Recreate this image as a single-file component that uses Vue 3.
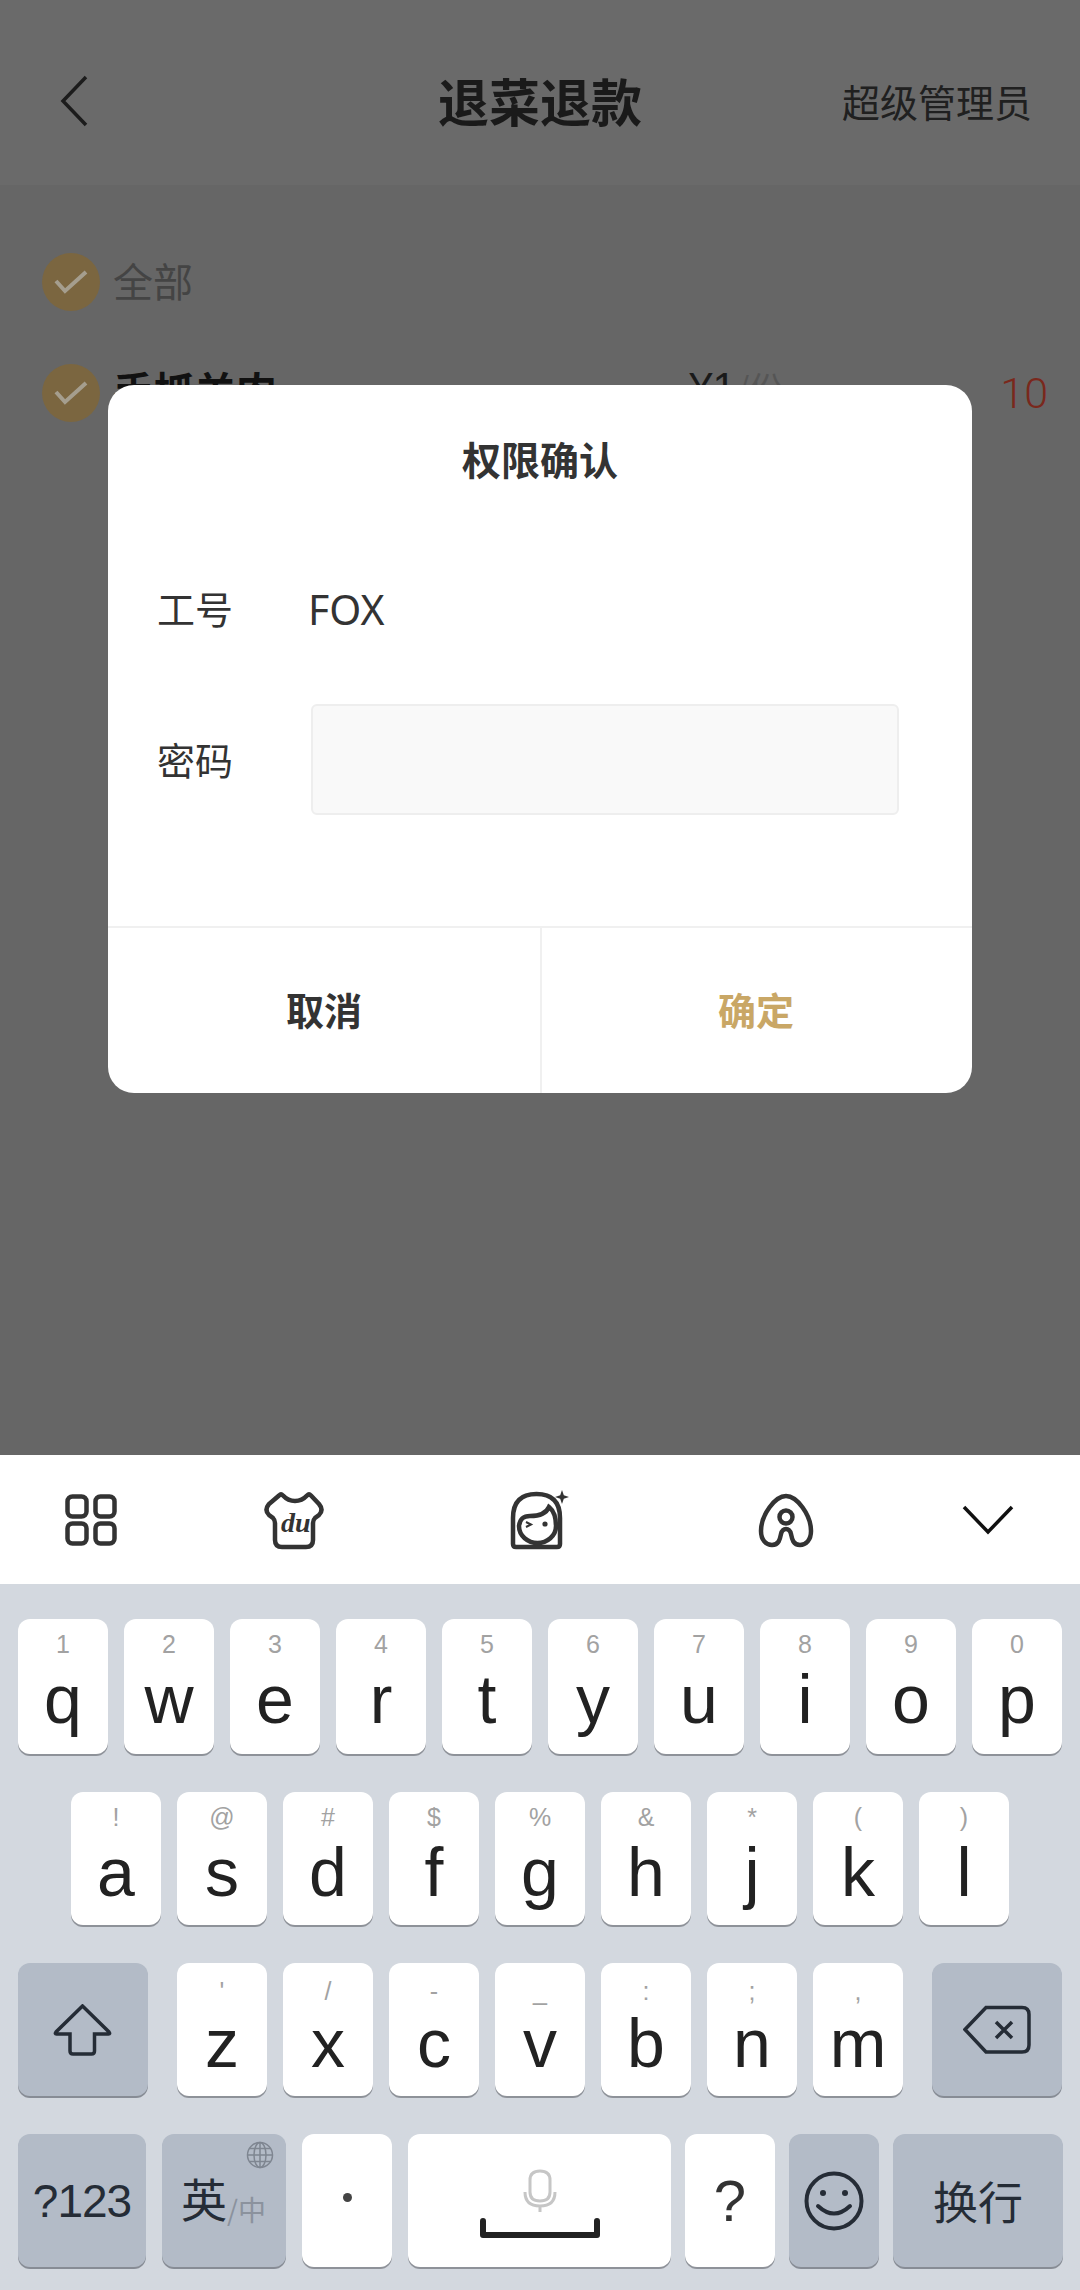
<template>
  <div class="screen">
    <!-- Dimmed page behind the dialog -->
    <div class="page">
      <header class="topbar">
        <svg class="back" width="32" height="54" viewBox="0 0 32 54">
          <path d="M28 3 L5 27 L28 51" />
        </svg>
        <h1 class="page-title">退菜退款</h1>
        <span class="role">超级管理员</span>
      </header>

      <div class="dish-list">
        <div class="dish-row">
          <span class="check"><svg width="34" height="26" viewBox="0 0 34 26"><path d="M2 12 L11 22 L32 3" /></svg></span>
          <span class="all-label">全部</span>
        </div>
        <div class="dish-row">
          <span class="check"><svg width="34" height="26" viewBox="0 0 34 26"><path d="M2 12 L11 22 L32 3" /></svg></span>
          <span class="dish-name">手抓羊肉</span>
          <span class="dish-price">¥1<small>/份</small></span>
          <span class="dish-qty">10</span>
        </div>
      </div>

      <!-- Permission dialog -->
      <div class="dialog">
        <div class="dialog-title">权限确认</div>
        <div class="form">
          <div class="form-row">
            <span class="form-label">工号</span>
            <span class="form-value">FOX</span>
          </div>
          <div class="form-row pwd-row">
            <span class="form-label">密码</span>
            <div class="pwd-input"></div>
          </div>
        </div>
        <div class="dialog-actions">
          <div class="action">取消</div>
          <div class="action confirm">确定</div>
        </div>
      </div>
    </div>

    <!-- Keyboard toolbar -->
    <div class="toolbar">
      <svg class="tool-grid" width="52" height="52" viewBox="0 0 52 52">
        <rect x="2.5" y="2.5" width="19" height="20" rx="5" />
        <rect x="30.5" y="2.5" width="19" height="20" rx="5" />
        <rect x="2.5" y="29.5" width="19" height="20" rx="5" />
        <rect x="30.5" y="29.5" width="19" height="20" rx="5" />
      </svg>
      <svg class="tool-shirt" width="90" height="80" viewBox="0 0 90 80">
        <path d="M29 15.5 Q31 13.5 33 15.5 Q38 21 45 21 Q52 21 57 15.5 Q59 13.5 61 15.5 L69 24 Q74 30 69 35 L65 38 Q63 40 63 43 V60 Q63 67 56 67 H32 Q25 67 25 60 V43 Q25 40 23 38 L19 35 Q14 30 19 24 Z" />
        <text x="31" y="52" class="du">du</text>
      </svg>
      <svg class="tool-face" width="80" height="80" viewBox="0 0 80 80">
        <path d="M13 64 V38 Q13 14 36.5 14 Q60 14 60 38 V64 Q60 67 57 67 H16 Q13 67 13 64 Z" />
        <path d="M19 46 C20 38 24 36 30 36 C38 36 46 34 49 27 C54 31 56 38 56 46 C56 56 47 63 37.5 63 C28 63 19 56 19 46 Z" />
        <path class="thin" d="M26 42 L31 44.5 L26 47" />
        <circle class="solid" cx="45" cy="44" r="2.6" />
        <path class="solid" d="M62 10 L63.8 15.2 L69 17 L63.8 18.8 L62 24 L60.2 18.8 L55 17 L60.2 15.2 Z" />
      </svg>
      <svg class="tool-a" width="80" height="70" viewBox="0 0 80 70">
        <path d="M41 11 C30 11 16 30 16 46 C16 55 21 60 27 60 C34 60 35 54 36 49 C37 45 39 44 41 44 C43 44 45 45 46 49 C47 54 48 60 55 60 C61 60 66 55 66 46 C66 30 52 11 41 11 Z" />
        <circle cx="41" cy="32" r="6.5" />
      </svg>
      <svg class="tool-down" width="52" height="30" viewBox="0 0 52 30">
        <path d="M2 2 L26 27 L50 2" />
      </svg>
    </div>

    <!-- Keyboard -->
    <div class="keyboard">
      <div class="row row-1">
        <div v-for="k in row1" :key="k[0]" class="key">
          <span class="hint">{{ k[1] }}</span>
          <span class="letter">{{ k[0] }}</span>
        </div>
      </div>
      <div class="row row-2">
        <div v-for="k in row2" :key="k[0]" class="key">
          <span class="hint">{{ k[1] }}</span>
          <span class="letter">{{ k[0] }}</span>
        </div>
      </div>
      <div class="row row-3">
        <div class="key fn shift">
          <svg width="60" height="52" viewBox="0 0 60 52">
            <path d="M29.5 2 L3 28 Q1.5 30 3.5 30 H17 V47 Q17 50 20 50 H38.5 Q41.5 50 41.5 47 V30 H55.5 Q57.5 30 56 28 Z" />
          </svg>
        </div>
        <div v-for="k in row3" :key="k[0]" class="key low-hint">
          <span class="hint">{{ k[1] }}</span>
          <span class="letter">{{ k[0] }}</span>
        </div>
        <div class="key fn backspace">
          <svg width="68" height="50" viewBox="0 0 68 50">
            <path d="M23 2.5 H59 Q66 2.5 66 9.5 V40 Q66 47 59 47 H23 L2 24.5 Z" />
            <path d="M33 17 L49 33 M49 17 L33 33" />
          </svg>
        </div>
      </div>
      <div class="row row-4">
        <div class="key fn num">?123</div>
        <div class="key fn lang">
          <svg class="globe" width="28" height="28" viewBox="0 0 28 28">
            <circle cx="14" cy="14" r="12.5" />
            <ellipse cx="14" cy="14" rx="6" ry="12.5" />
            <path d="M14 1.5 V26.5 M1.5 14 H26.5 M3.5 7.5 H24.5 M3.5 20.5 H24.5" />
          </svg>
          <span class="lang-en">英</span><span class="lang-cn">/中</span>
        </div>
        <div class="key dot-key"><i class="dot"></i></div>
        <div class="key space">
          <svg width="120" height="72" viewBox="0 0 120 72">
            <path class="mic" d="M50 12 Q50 3 60 3 Q70 3 70 12 V24 Q70 33 60 33 Q50 33 50 24 Z" />
            <path class="mic" d="M45 24 Q45 38 60 38 Q75 38 75 24 M60 38 V44" />
            <path class="bar" d="M3 53 V67 H117 V53" />
          </svg>
        </div>
        <div class="key tight question">?</div>
        <div class="key fn tight emoji">
          <svg width="60" height="60" viewBox="0 0 60 60">
            <circle cx="30" cy="30" r="27.5" />
            <circle class="eye" cx="19" cy="22" r="3" />
            <circle class="eye" cx="41" cy="22" r="3" />
            <path d="M14 35 Q30 50 46 35" />
          </svg>
        </div>
        <div class="key fn tight enter">换行</div>
      </div>
    </div>
  </div>
</template>

<script setup>
// Letter and the small symbol printed above it
const row1 = [['q', '1'], ['w', '2'], ['e', '3'], ['r', '4'], ['t', '5'], ['y', '6'], ['u', '7'], ['i', '8'], ['o', '9'], ['p', '0']]
const row2 = [['a', '!'], ['s', '@'], ['d', '#'], ['f', '$'], ['g', '%'], ['h', '&'], ['j', '*'], ['k', '('], ['l', ')']]
const row3 = [['z', "'"], ['x', '/'], ['c', '-'], ['v', '_'], ['b', ':'], ['n', ';'], ['m', ',']]
</script>

<style scoped>
.screen {
  width: 1080px;
  height: 2290px;
  display: flex;
  flex-direction: column;
  overflow: hidden;
  font-family: "Noto Sans CJK SC", "Liberation Sans", sans-serif;
}

/* Page under the mask */
.page {
  position: relative;
  height: 1455px;
  background: #666;
}

.topbar {
  position: relative;
  height: 185px;
  display: flex;
  align-items: center;
  padding: 16px 48px 0 58px;
  box-sizing: border-box;
  background: #6a6a6a;
}

.back {
  fill: none;
  stroke: #1c1c1c;
  stroke-width: 3.5;
}

.page-title {
  position: absolute;
  left: 0;
  right: 0;
  top: 66px;
  margin: 0;
  text-align: center;
  font-size: 51px;
  line-height: 68px;
  font-weight: 700;
  color: #1a1a1a;
}

.role {
  margin-left: auto;
  font-size: 38px;
  color: #202020;
}

.dish-list {
  padding: 41px 32px 0 42px;
}

.dish-row {
  height: 111px;
  display: flex;
  align-items: center;
}

.check {
  width: 58px;
  height: 58px;
  border-radius: 50%;
  background: #7b6640;
  display: flex;
  align-items: center;
  justify-content: center;
  margin-right: 13px;
}

.check path {
  fill: none;
  stroke: #a59e8e;
  stroke-width: 4;
}

.all-label {
  margin-top: -3px;
  font-size: 40px;
  color: #444;
}

.dish-name {
  margin-top: -8px;
  font-size: 41px;
  font-weight: 700;
  color: #111;
}

.dish-price {
  margin-left: auto;
  margin-right: 217px;
  margin-top: -10px;
  font-family: "Liberation Sans", sans-serif;
  font-size: 42px;
  color: #1a1a1a;
}

.dish-price small {
  font-family: "Noto Sans CJK SC", sans-serif;
  font-size: 34px;
  color: #555;
}

.dish-qty {
  font-family: "Roboto", "Liberation Sans", sans-serif;
  font-weight: 300;
  font-size: 43px;
  color: #7a281c;
}

/* Dialog */
.dialog {
  position: absolute;
  left: 108px;
  top: 385px;
  width: 864px;
  height: 708px;
  display: flex;
  flex-direction: column;
  background: #fff;
  border-radius: 26px;
  overflow: hidden;
}

.dialog-title {
  height: 146px;
  display: flex;
  align-items: center;
  justify-content: center;
  font-size: 39px;
  font-weight: 700;
  color: #333;
}

.form {
  padding: 50px 73px 0 49px;
}

.form-row {
  height: 56px;
  display: flex;
  align-items: center;
  font-size: 38px;
  color: #333;
}

.form-label {
  width: 154px;
  margin-top: -3px;
  flex-shrink: 0;
}

.form-value {
  margin-left: -3px;
  font-family: "Noto Sans", "Liberation Sans", sans-serif;
  font-size: 41px;
}

.pwd-row {
  height: 111px;
  margin-top: 67px;
}

.pwd-input {
  flex: 1;
  height: 111px;
  box-sizing: border-box;
  background: #f9f9f9;
  border: 2px solid #eeeeee;
  border-radius: 6px;
}

.dialog-actions {
  margin-top: auto;
  height: 167px;
  padding-bottom: 4px;
  display: flex;
  border-top: 2px solid #f0f0f0;
  box-sizing: border-box;
}

.action {
  flex: 1;
  display: flex;
  align-items: center;
  justify-content: center;
  font-size: 38px;
  font-weight: 700;
  color: #333;
}

.action.confirm {
  color: #c9a766;
  position: relative;
}

.action.confirm::before {
  content: "";
  position: absolute;
  left: 0;
  top: 0;
  bottom: -4px;
  width: 2px;
  background: #f0f0f0;
}

/* Toolbar */
.toolbar {
  height: 129px;
  display: flex;
  align-items: center;
  background: #fff;
}

.toolbar svg {
  flex-shrink: 0;
  fill: none;
  stroke: #333;
  stroke-width: 4.5;
}

.tool-grid { margin-left: 65px; }
.tool-shirt { margin-left: 133px; }
.tool-face { margin-left: 160px; }
.tool-a { margin-left: 165px; }
.tool-down { margin-left: 137px; }

.toolbar .tool-down {
  stroke: #111;
  stroke-width: 3.5;
}

.toolbar .thin { stroke-width: 2; }

.toolbar .solid {
  fill: #333;
  stroke: none;
}

.toolbar .du {
  font-family: "Liberation Serif", serif;
  font-style: italic;
  font-weight: 700;
  font-size: 28px;
  fill: #333;
  stroke: none;
}

/* Keyboard */
.keyboard {
  flex: 1;
  display: flex;
  flex-direction: column;
  gap: 38px;
  padding-top: 35px;
  background: #d3d8df;
  font-family: "Liberation Sans", sans-serif;
}

.row {
  display: flex;
  gap: 16px;
  height: 133px;
  padding-left: 18px;
}

.row-1 { height: 135px; }
.row-2 { padding-left: 71px; }

.key {
  width: 90px;
  display: flex;
  flex-direction: column;
  align-items: center;
  flex-shrink: 0;
  background: #fff;
  border-radius: 12px;
  box-shadow: 0 2px 0 #8e9299;
  color: #222;
}

.hint {
  height: 30px;
  padding-top: 10px;
  font-size: 25px;
  line-height: 30px;
  color: #a2a2a2;
}

.letter {
  margin-top: 5px;
  font-size: 68px;
  line-height: 70px;
}

.low-hint .hint { padding-top: 13px; }
.low-hint .letter { margin-top: 2px; }

.fn {
  background: #b3bbc7;
  box-shadow: 0 2px 0 #878c95;
  align-items: center;
  justify-content: center;
  color: #252c36;
}

.shift svg,
.backspace svg {
  fill: none;
  stroke: #252c36;
  stroke-width: 3.5;
}

.shift {
  width: 130px;
  margin-right: 13px;
}

.backspace {
  width: 130px;
  margin-left: 13px;
}

.num {
  width: 128px;
  font-size: 46px;
  letter-spacing: -1px;
}

.lang {
  position: relative;
  width: 124px;
  flex-direction: row;
  justify-content: flex-start;
  align-items: baseline;
  padding: 30px 0 0 19px;
  box-sizing: border-box;
  font-family: "Noto Sans CJK SC", sans-serif;
}

.globe {
  position: absolute;
  top: 7px;
  right: 12px;
  fill: none;
  stroke: #7f8691;
  stroke-width: 1.5;
}

.lang-en {
  font-size: 46px;
}

.lang-cn {
  position: relative;
  top: 4px;
  font-size: 28px;
  color: #8b929d;
}

.dot-key {
  justify-content: center;
}

.dot {
  width: 9px;
  height: 9px;
  margin-bottom: 7px;
  border-radius: 50%;
  background: #444;
}

.space {
  width: 263px;
  padding-top: 34px;
  box-sizing: border-box;
}

.space svg {
  fill: none;
}

.mic {
  stroke: #c6c6c6;
  stroke-width: 3;
}

.bar {
  stroke: #222;
  stroke-width: 6;
  stroke-linejoin: round;
  stroke-linecap: round;
}

.tight {
  margin-left: -2px;
}

.question {
  justify-content: center;
  font-size: 58px;
  color: #333;
}

.emoji svg {
  fill: none;
  stroke: #252c36;
  stroke-width: 4;
  stroke-linecap: round;
}

.emoji .eye {
  fill: #252c36;
  stroke: none;
}

.enter {
  width: 170px;
  font-family: "Noto Sans CJK SC", sans-serif;
  font-size: 45px;
}
</style>
